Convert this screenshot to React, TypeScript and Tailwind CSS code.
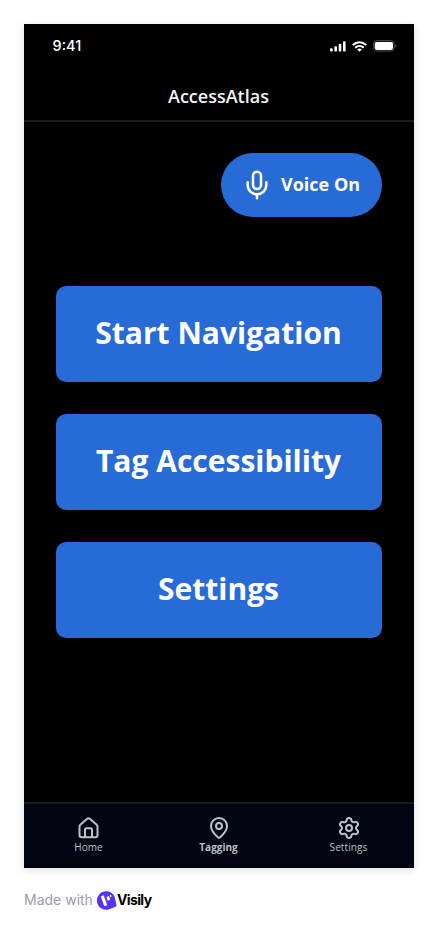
import { MapPin, Mic, Settings } from 'lucide-react';

const actions = ['Start Navigation', 'Tag Accessibility', 'Settings'];

function HomeIcon({ className }: { className?: string }) {
  return (
    <svg
      className={className}
      viewBox="0 0 24 24"
      fill="none"
      stroke="currentColor"
      strokeWidth="2"
      strokeLinecap="round"
      strokeLinejoin="round"
    >
      <path d="M2.5 10.4c0-.7.3-1.3.8-1.7l6.900-5.900c.8-.7 1.800-.7 2.600 0l6.900 5.900c.5.4.8 1 .8 1.700v8.600c0 1.300-.9 2.200-2.200 2.200H4.700c-1.300 0-2.200-.9-2.200-2.200z" />
      <path d="M8 21v-7.300c0-.9.5-1.400 1.400-1.400h4.200c.9 0 1.400.5 1.400 1.400V21" />
    </svg>
  );
}

const tabs = [
  { label: 'Home', Icon: HomeIcon, active: false },
  { label: 'Tagging', Icon: MapPin, active: true },
  { label: 'Settings', Icon: Settings, active: false },
];

function StatusBar() {
  return (
    <div className="flex h-11 items-center justify-between pl-[28.5px] pr-[17px] text-white">
      <span className="font-['Inter',sans-serif] text-[14.5px] font-medium leading-5">9:41</span>
      <div className="flex items-center gap-[6px]">
        <svg className="h-[11px] w-4" viewBox="0 0 16 11" fill="currentColor">
          <rect x="0.1" y="7.3" width="2.6" height="3.2" rx="0.7" />
          <rect x="4.4" y="5.2" width="2.6" height="5.3" rx="0.7" />
          <rect x="8.7" y="2.8" width="2.6" height="7.7" rx="0.7" />
          <rect x="13" y="0.2" width="2.6" height="10.3" rx="0.7" />
        </svg>
        <svg className="h-[11px] w-[15px]" viewBox="0 0 15 11" fill="none" stroke="currentColor" strokeWidth="2">
          <path d="M.8 4.1C4.7.3 10.3.3 14.2 4.1" />
          <path d="M3.2 6.7c2.5-2.3 6.1-2.3 8.6 0" />
          <path d="M5.2 8.4c1.3-1.1 3.3-1.1 4.6 0L7.5 10.8z" fill="currentColor" stroke="none" />
        </svg>
        <svg className="h-3 w-6" viewBox="0 0 24 12" fill="none">
          <rect x="0.7" y="0.7" width="20.4" height="10.4" rx="3.2" stroke="#555" />
          <rect x="1.8" y="1.9" width="18.2" height="8" rx="1.8" fill="#fff" />
          <path d="M22.2 4.2v3.6c.9-.3 1.2-1 1.2-1.8s-.3-1.5-1.2-1.8z" fill="#555" />
        </svg>
      </div>
    </div>
  );
}

export default function App() {
  return (
    <div className="h-[932px] w-[438px] bg-white p-6 font-['Open_Sans','Noto_Sans',sans-serif]">
      <div className="flex h-[844px] w-[390px] flex-col bg-black shadow-[0_2px_8px_rgba(23,26,60,0.14)]">
        <StatusBar />
        <header className="flex h-[54px] items-center justify-center border-b-2 border-[#171a1f] pr-px pt-[3px] text-lg font-semibold leading-7 text-[#f3f4f6]">
          AccessAtlas
        </header>
        <main className="flex flex-1 flex-col px-8 pt-[31px]">
          <button className="flex h-16 w-[161px] items-center self-end rounded-full bg-[#286bd6] pl-5 text-lg font-bold text-white">
            <Mic className="mr-2 size-8" strokeWidth={1.9} />
            <span className="whitespace-nowrap pb-0.5">Voice On</span>
          </button>
          <div className="mt-[69px] flex flex-col gap-8">
            {actions.map((label) => (
              <button
                key={label}
                className="h-24 rounded-[10px] bg-[#286bd6] pb-0.5 pr-px text-3xl font-bold text-white"
              >
                {label}
              </button>
            ))}
          </div>
        </main>
        <nav className="grid h-[66px] grid-cols-3 border-t-2 border-[#171a1f] bg-[#020511] text-[#bdc1ca]">
          {tabs.map(({ label, Icon, active }) => (
            <div key={label} className="flex flex-col items-center pt-3">
              <Icon className="size-6" strokeWidth={2} />
              <span
                className={
                  active
                    ? '-mt-px pr-px text-[10px] font-bold leading-4'
                    : '-mt-px pr-px text-[10px] leading-4 tracking-[0.1px]'
                }
              >
                {label}
              </span>
            </div>
          ))}
        </nav>
      </div>
      <footer className="mt-[22px] flex h-5 items-center font-['Inter',sans-serif]">
        <span className="text-sm text-[#9a9eae]">Made with</span>
        <svg className="ml-1 h-[19px] w-5" viewBox="0 0 20 19">
          <path
            d="M9.3.3a9.2 9.2 0 1 0 2.8 17.9l6-2.2c1.2-.4 1.7-1.2 1.3-2.4L17.6 5.8A9.2 9.2 0 0 0 9.3.3z"
            fill="#5534f5"
          />
          <path d="M3.800 5.500l2.900-1.200 3.600 9.900-2.200.8c-.5.2-.9 0-1.100-.5z" fill="#fff" />
          <path d="M9.500 6l2.500-.9 1 3c.2.500 0 .8-.4 1l-2 .7z" fill="#fff" />
          <path d="M12.600 4.200l1.400-.5.600 1.800-1.400.5z" fill="#fff" />
        </svg>
        <span className="text-sm font-bold tracking-[-0.6px] text-black">Visily</span>
      </footer>
    </div>
  );
}
